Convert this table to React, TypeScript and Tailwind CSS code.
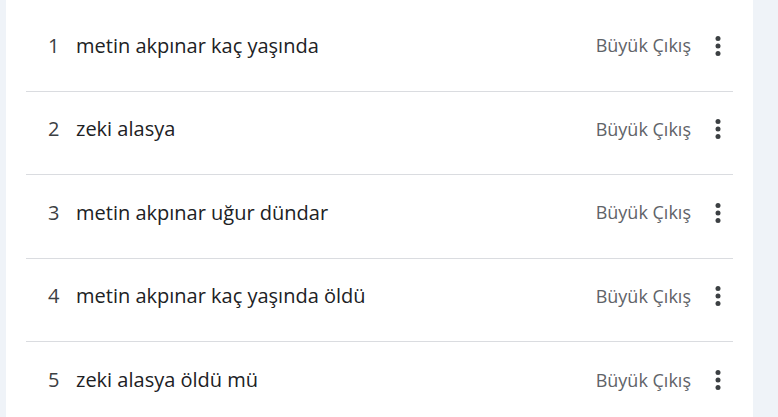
const QUERIES = [
  "metin akpınar kaç yaşında",
  "zeki alasya",
  "metin akpınar uğur dündar",
  "metin akpınar kaç yaşında öldü",
  "zeki alasya öldü mü",
];

function MoreVert() {
  return (
    <svg width="30" height="30" viewBox="0 0 24 24" className="fill-[#3c4043]">
      <circle cx="12" cy="6" r="2" />
      <circle cx="12" cy="12" r="2" />
      <circle cx="12" cy="18" r="2" />
    </svg>
  );
}

export default function App() {
  return (
    <div className="flex h-[417px] w-[778px] overflow-hidden bg-[#eff3f8] font-['Open_Sans',sans-serif]">
      <div className="ml-[6px] w-[747px] bg-white pt-[8px]">
        {QUERIES.map((q, i) => (
          <div
            key={q}
            className={
              "ml-[20px] mr-[20px] flex h-[83.5px] items-center pb-[7px] " +
              (i < QUERIES.length - 1 ? "border-b border-[#dadce0]" : "")
            }
          >
            <span className="w-[50px] pl-[22px] text-[20px] text-[#3c4043]">{i + 1}</span>
            <span className="flex-1 text-[20px] text-[#202124]">{q}</span>
            <span className="text-[18px] text-[#5f6368]">Büyük Çıkış</span>
            <span className="ml-[12px] flex">
              <MoreVert />
            </span>
          </div>
        ))}
      </div>
    </div>
  );
}
